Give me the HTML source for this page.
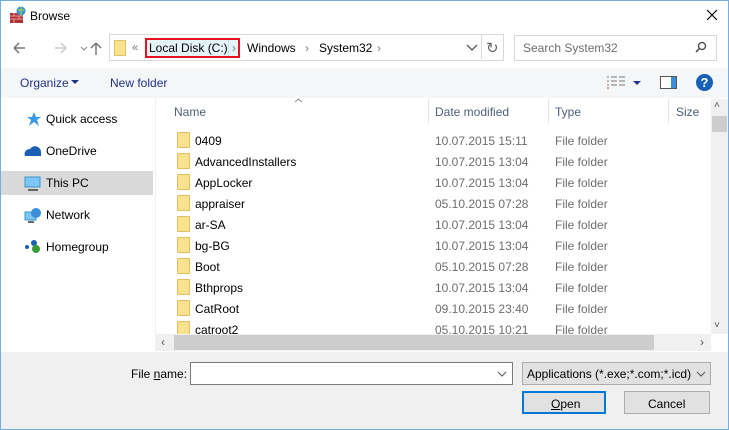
<html><head><style>
body{margin:0;width:729px;height:430px;overflow:hidden;font-family:"Liberation Sans",sans-serif;font-size:12px;color:#000;position:relative;background:#fff}
.a{position:absolute}
.t{white-space:nowrap}
.fold{position:absolute;width:11px;height:14px;background:#fbe28f;border:1px solid #e0bf5c;border-radius:1px}
</style></head><body>
<div class="a" style="left:0;top:0;width:727px;height:428px;border:1px solid #74aee0"></div>
<!-- title -->
<svg class="a" style="left:9px;top:6px" width="18" height="18"><rect x="1" y="7" width="13" height="10" fill="#a33"/><path d="M1 10h13M1 13h13M5 7v3M10 10v3M5 13v4" stroke="#e99" stroke-width="1"/><circle cx="12" cy="5" r="4.5" fill="#3a8fd8"/><path d="M9 4h6M12 1v8" stroke="#8c6" stroke-width="1.5"/></svg>
<div class="a t" style="left:30px;top:9px">Browse</div>
<svg class="a" style="left:706px;top:9px" width="12" height="12"><path d="M1 1L11 11M11 1L1 11" stroke="#000" stroke-width="1.2"/></svg>
<!-- nav -->
<svg class="a" style="left:12px;top:40px" width="100" height="16"><path d="M2 8h11M2 8l5-5M2 8l5 5" stroke="#777" stroke-width="1.5" fill="none"/><path d="M43 8h11M54 8l-5-5M54 8l-5 5" stroke="#ccc" stroke-width="1.5" fill="none"/><path d="M69 7l3 3 3-3" stroke="#888" fill="none"/><path d="M84 15V3M84 3l-5 5M84 3l5 5" stroke="#777" stroke-width="1.5" fill="none"/></svg>
<div class="a" style="left:109px;top:34px;width:393px;height:25px;border:1px solid #d9d9d9"></div>
<div class="fold" style="left:114px;top:40px;width:10px;height:14px"></div>
<div class="a t" style="left:132px;top:42px;color:#777;font-size:11px">«</div>
<div class="a" style="left:145px;top:38px;width:95px;height:20px;background:#e5f3fb;border:2px solid #e8111e;box-sizing:border-box"></div>
<div class="a t" style="left:149px;top:41px">Local Disk (C:)</div>
<div class="a" style="left:228px;top:40px;width:1px;height:16px;background:#cde"></div>
<div class="a t" style="left:232px;top:41px;color:#777">›</div>
<div class="a t" style="left:247px;top:41px">Windows</div>
<div class="a t" style="left:305px;top:41px;color:#777">›</div>
<div class="a t" style="left:319px;top:41px">System32</div>
<div class="a t" style="left:377px;top:41px;color:#777">›</div>
<svg class="a" style="left:466px;top:44px" width="12" height="8"><path d="M1 1l5 5 5-5" stroke="#555" fill="none" stroke-width="1.3"/></svg>
<div class="a" style="left:481px;top:35px;width:1px;height:24px;background:#d9d9d9"></div>
<div class="a t" style="left:486px;top:39px;color:#666;font-size:15px">↻</div>
<div class="a" style="left:514px;top:35px;width:201px;height:24px;border:1px solid #d9d9d9"></div>
<div class="a t" style="left:523px;top:41px;color:#6d6d6d">Search System32</div>
<svg class="a" style="left:695px;top:41px" width="12" height="12"><circle cx="7" cy="5" r="3.5" stroke="#444" fill="none" stroke-width="1.3"/><path d="M4.5 7.5L1 11" stroke="#444" stroke-width="1.5"/></svg>
<!-- toolbar -->
<div class="a" style="left:1px;top:68px;width:727px;height:30px;background:#f5f6f7"></div>
<div class="a t" style="left:20px;top:76px;color:#1e3287">Organize</div>
<svg class="a" style="left:71px;top:80px" width="8" height="5"><path d="M0 0h8L4 4z" fill="#1e3287"/></svg>
<div class="a t" style="left:110px;top:76px;color:#1e3287">New folder</div>
<svg class="a" style="left:606px;top:75px" width="40" height="16"><path d="M1 2h2M1 6h2M1 10h2M5 2h6M5 6h6M5 10h6M13 2h6M13 6h6M13 10h6" stroke="#777"/><path d="M1 13h2" stroke="#c33"/><path d="M27 6h8l-4 4z" fill="#1e3287"/></svg>
<svg class="a" style="left:660px;top:76px" width="18" height="14"><rect x="0.5" y="0.5" width="16" height="12" fill="#fff" stroke="#555"/><rect x="11" y="1" width="5" height="11" fill="#3b8fd9"/></svg>
<div class="a" style="left:696px;top:74px;width:17px;height:17px;border-radius:50%;background:#1760b8;color:#fff;font-weight:bold;text-align:center;line-height:17px;font-size:13px">?</div>
<!-- nav pane -->
<div class="a" style="left:1px;top:171px;width:152px;height:24px;background:#d9d9d9"></div>
<svg class="a" style="left:25px;top:111px" width="16" height="16"><path d="M9 1l2 5h5l-4 3 2 6-5-4-5 4 2-6-4-3h5z" fill="#3c9be6"/></svg>
<svg class="a" style="left:24px;top:145px" width="18" height="12"><path d="M1 11a5 5 0 0 1 5-7a6 6 0 0 1 11 4v3z" fill="#1b5fb3"/></svg>
<svg class="a" style="left:24px;top:176px" width="18" height="16"><rect x="1" y="1" width="15" height="10" fill="#7ec4f5" stroke="#39c"/><path d="M4 14h10" stroke="#666" stroke-width="2"/></svg>
<svg class="a" style="left:24px;top:207px" width="18" height="16"><rect x="1" y="5" width="11" height="8" fill="#7ec4f5" stroke="#39c"/><circle cx="12" cy="6" r="5" fill="#3b8fd9"/><path d="M4 15h6" stroke="#666" stroke-width="2"/></svg>
<svg class="a" style="left:24px;top:239px" width="18" height="16"><circle cx="3" cy="8" r="2" fill="#1b5fb3"/><circle cx="10" cy="4" r="3" fill="#1b5fb3"/><circle cx="12" cy="10" r="4" fill="#3a9a3a"/></svg>
<div class="a t" style="left:46px;top:112px">Quick access</div>
<div class="a t" style="left:46px;top:144px">OneDrive</div>
<div class="a t" style="left:46px;top:176px">This PC</div>
<div class="a t" style="left:46px;top:208px">Network</div>
<div class="a t" style="left:46px;top:240px">Homegroup</div>
<div class="a" style="left:155px;top:98px;width:1px;height:253px;background:#f0f0f0"></div>
<!-- header -->
<svg class="a" style="left:294px;top:98px" width="9" height="5"><path d="M1 4l3.5-3 3.5 3" stroke="#888" fill="none"/></svg>
<div class="a t" style="left:174px;top:105px;color:#4c607a">Name</div>
<div class="a" style="left:428px;top:99px;width:1px;height:24px;background:#e5e5e5"></div>
<div class="a t" style="left:435px;top:105px;color:#4c607a">Date modified</div>
<div class="a" style="left:548px;top:99px;width:1px;height:24px;background:#e5e5e5"></div>
<div class="a t" style="left:555px;top:105px;color:#4c607a">Type</div>
<div class="a" style="left:668px;top:99px;width:1px;height:24px;background:#e5e5e5"></div>
<div class="a t" style="left:676px;top:105px;color:#4c607a">Size</div>
<div id="rows"></div>
<!-- rows -->
<div class="a" style="left:0;top:0">
<div class="fold" style="left:177px;top:132px"></div><div class="a t" style="left:195px;top:134px">0409</div><div class="a t" style="left:435px;top:134px;color:#6d6d6d">10.07.2015 15:11</div><div class="a t" style="left:555px;top:134px;color:#6d6d6d">File folder</div>
<div class="fold" style="left:177px;top:153px"></div><div class="a t" style="left:195px;top:155px">AdvancedInstallers</div><div class="a t" style="left:435px;top:155px;color:#6d6d6d">10.07.2015 13:04</div><div class="a t" style="left:555px;top:155px;color:#6d6d6d">File folder</div>
<div class="fold" style="left:177px;top:174px"></div><div class="a t" style="left:195px;top:176px">AppLocker</div><div class="a t" style="left:435px;top:176px;color:#6d6d6d">10.07.2015 13:04</div><div class="a t" style="left:555px;top:176px;color:#6d6d6d">File folder</div>
<div class="fold" style="left:177px;top:195px"></div><div class="a t" style="left:195px;top:197px">appraiser</div><div class="a t" style="left:435px;top:197px;color:#6d6d6d">05.10.2015 07:28</div><div class="a t" style="left:555px;top:197px;color:#6d6d6d">File folder</div>
<div class="fold" style="left:177px;top:216px"></div><div class="a t" style="left:195px;top:218px">ar-SA</div><div class="a t" style="left:435px;top:218px;color:#6d6d6d">10.07.2015 13:04</div><div class="a t" style="left:555px;top:218px;color:#6d6d6d">File folder</div>
<div class="fold" style="left:177px;top:237px"></div><div class="a t" style="left:195px;top:239px">bg-BG</div><div class="a t" style="left:435px;top:239px;color:#6d6d6d">10.07.2015 13:04</div><div class="a t" style="left:555px;top:239px;color:#6d6d6d">File folder</div>
<div class="fold" style="left:177px;top:258px"></div><div class="a t" style="left:195px;top:260px">Boot</div><div class="a t" style="left:435px;top:260px;color:#6d6d6d">05.10.2015 07:28</div><div class="a t" style="left:555px;top:260px;color:#6d6d6d">File folder</div>
<div class="fold" style="left:177px;top:279px"></div><div class="a t" style="left:195px;top:281px">Bthprops</div><div class="a t" style="left:435px;top:281px;color:#6d6d6d">10.07.2015 13:04</div><div class="a t" style="left:555px;top:281px;color:#6d6d6d">File folder</div>
<div class="fold" style="left:177px;top:300px"></div><div class="a t" style="left:195px;top:302px">CatRoot</div><div class="a t" style="left:435px;top:302px;color:#6d6d6d">09.10.2015 23:40</div><div class="a t" style="left:555px;top:302px;color:#6d6d6d">File folder</div>
<div class="fold" style="left:177px;top:321px"></div><div class="a t" style="left:195px;top:323px">catroot2</div><div class="a t" style="left:435px;top:323px;color:#6d6d6d">05.10.2015 10:21</div><div class="a t" style="left:555px;top:323px;color:#6d6d6d">File folder</div>
</div>
<!-- v scrollbar -->
<div class="a" style="left:711px;top:99px;width:17px;height:235px;background:#f0f0f0"></div>
<div class="a" style="left:712px;top:116px;width:15px;height:16px;background:#cdcdcd"></div>
<div class="a t" style="left:714px;top:100px;font-size:10px;color:#555">˄</div>
<div class="a t" style="left:714px;top:320px;font-size:10px;color:#555">˅</div>
<!-- h scrollbar -->
<div class="a" style="left:156px;top:334px;width:555px;height:17px;background:#f0f0f0"></div>
<div class="a" style="left:174px;top:335px;width:480px;height:15px;background:#cdcdcd"></div>
<div class="a t" style="left:161px;top:335px;color:#555">‹</div>
<div class="a t" style="left:700px;top:335px;color:#555">›</div>
<!-- bottom -->
<div class="a" style="left:1px;top:352px;width:727px;height:77px;background:#f0f0f0"></div>
<div class="a t" style="left:131px;top:367px">File <u>n</u>ame:</div>
<div class="a" style="left:190px;top:362px;width:321px;height:21px;border:1px solid #7a7a7a;background:#fff"></div>
<svg class="a" style="left:497px;top:371px" width="10" height="6"><path d="M1 1l4 4 4-4" stroke="#555" fill="none"/></svg>
<div class="a" style="left:522px;top:362px;width:187px;height:21px;border:1px solid #adadad;background:#e1e1e1"></div>
<div class="a t" style="left:527px;top:367px">Applications (*.exe;*.com;*.icd)</div>
<svg class="a" style="left:696px;top:371px" width="10" height="6"><path d="M1 1l4 4 4-4" stroke="#555" fill="none"/></svg>
<div class="a" style="left:522px;top:391px;width:84px;height:23px;border:2px solid #0078d7;background:#e1e1e1;box-sizing:border-box"></div>
<div class="a t" style="left:551px;top:397px"><u>O</u>pen</div>
<div class="a" style="left:624px;top:391px;width:86px;height:23px;border:1px solid #adadad;background:#e1e1e1;box-sizing:border-box"></div>
<div class="a t" style="left:648px;top:397px">Cancel</div>
</body></html>
